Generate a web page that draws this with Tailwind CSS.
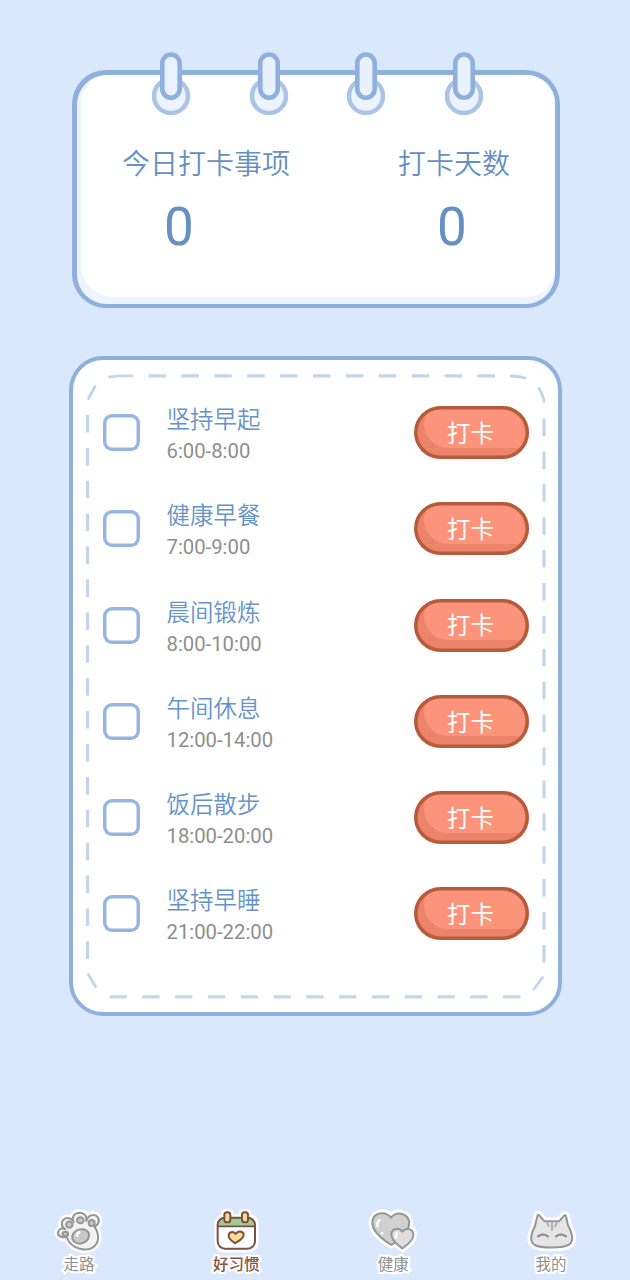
<!DOCTYPE html>
<html lang="zh-CN">
<head>
<meta charset="utf-8">
<title>好习惯</title>
<script src="https://cdn.jsdelivr.net/npm/@tailwindcss/browser@4"></script>
</head>
<body class="bg-[#dae8fd] font-['Roboto','Noto_Sans_CJK_SC',sans-serif]">
<svg class="hidden">
  <symbol id="ring" viewBox="0 0 40 64">
    <circle cx="19" cy="45" r="17" fill="#ecf3fd" stroke="#aac4e6" stroke-width="4.500"/>
    <rect x="10.300" y="3.500" width="17.400" height="43.200" rx="8.700" fill="#e8f1fd" stroke="#8fb0dc" stroke-width="4.600"/>
  </symbol>
</svg>
<div class="flex h-[1280px] w-[630px] flex-col overflow-hidden pt-[70px]">

  <section class="relative ml-[72px] h-[238px] w-[487.500px] shrink-0 rounded-[34px] bg-[#8fb0dc] p-[4.500px]">
    <div class="h-full rounded-[29.500px] bg-[#edf4fe] pl-[4.500px]">
      <div class="h-[222.500px] rounded-[28px] rounded-bl-[32px] bg-white px-[42px] pt-[74px]">
        <div class="flex justify-between text-[#668fc2]">
          <div class="-ml-px w-[168px]">
            <h2 class="text-[28px] leading-[32px] font-[350] whitespace-nowrap">今日打卡事项</h2>
            <p class="pt-[14px] pl-[42px] text-[53px] leading-[64px]">0</p>
          </div>
          <div class="w-[115px]">
            <h2 class="text-[28px] leading-[32px] font-[350] whitespace-nowrap">打卡天数</h2>
            <p class="pt-[14px] pl-[39px] text-[53px] leading-[64px]">0</p>
          </div>
        </div>
      </div>
    </div>
    <div class="absolute -top-[19px] left-[80px] flex gap-[57.500px]">
      <svg class="h-16 w-10"><use href="#ring"/></svg>
      <svg class="h-16 w-10"><use href="#ring"/></svg>
      <svg class="h-16 w-10"><use href="#ring"/></svg>
      <svg class="h-16 w-10"><use href="#ring"/></svg>
    </div>
  </section>

  <section class="relative mt-12 ml-[69px] h-[660px] w-[493px] shrink-0 rounded-[34px] border-4 border-[#8fb0dc] bg-white">
    <svg class="absolute -top-1 -left-1 h-[660px] w-[493px]" viewBox="69 356 493 660" fill="none" stroke="#c3d5ea" stroke-width="3.200">
      <path d="M148.500 375.800H496" stroke-dasharray="17.500 15.400"/>
      <path d="M544 418.500V963" stroke-dasharray="17.500 15.400"/>
      <path d="M109.500 996.800H521" stroke-dasharray="17.300 15.500"/>
      <path d="M87.500 415V959" stroke-dasharray="17.500 15.400"/>
      <g stroke-linecap="round" stroke-width="2.800">
        <path d="M109.500 377.200Q114 376 120 375.800H132"/>
        <path d="M88.500 398.500L95 386.500"/>
        <path d="M511 376Q519 376 525 378"/>
        <path d="M539 388.500Q543 394.500 544.200 401.500"/>
        <path d="M542.500 977.500L534 989"/>
        <path d="M88.500 974.500L95.500 986.500"/>
      </g>
    </svg>
    <ul id="habits" class="pt-[23px]"></ul>
  </section>

  <nav class="mt-[184px] ml-[40px] flex h-[80px] w-[550px] shrink-0 justify-between text-center text-[15.500px] leading-[20px] font-normal">
    <div class="w-20">
      <svg class="h-[55px] w-20" viewBox="0 0 240 165" stroke-linecap="round" stroke-linejoin="round">
        <path d="M80 111C62 116 50 105 55 94C59 85 70 83 76 88C62 80 62 62 75 56C87 51 98 58 101 66C93 50 105 37 121 38C135 39 142 50 139 63C144 46 160 40 171 49C181 59 176 76 163 80C178 100 178 125 163 139C143 157 93 150 80 111Z" fill="#fff" stroke="#fff" stroke-width="21"/>
        <path fill="#f2f2f2" stroke="#969696" stroke-width="6" d="M80 111C62 116 50 105 55 94C59 85 70 83 76 88C62 80 62 62 75 56C87 51 98 58 101 66C93 50 105 37 121 38C135 39 142 50 139 63C144 46 160 40 171 49C181 59 176 76 163 80C178 100 178 125 163 139C143 157 93 150 80 111Z"/>
        <g fill="#c9c9c9" stroke="#969696" stroke-width="6">
          <ellipse cx="76" cy="102" rx="8.500" ry="6.500"/><circle cx="88" cy="74" r="9.500"/><ellipse cx="121" cy="61" rx="10" ry="9"/><circle cx="155" cy="69" r="9"/>
          <ellipse cx="122" cy="109" rx="26" ry="21" transform="rotate(-18 122 109)"/>
        </g>
        <path d="M111 107Q111 98 118 96" fill="none" stroke="#fff" stroke-width="8"/>
      </svg>
      <p class="-ml-0.5 text-[#8f8f8f] [-webkit-text-stroke:4px_white] [paint-order:stroke_fill]">走路</p>
    </div>
    <div class="w-20">
      <svg class="-ml-px h-[55px] w-20" viewBox="0 0 240 165" stroke-linecap="round" stroke-linejoin="round">
        <path d="M67 75Q67 54 86 54H159Q176 54 176 75V125Q176 146 154 146H89Q67 146 67 125ZM87 39H101V64H87ZM140 39H154V64H140Z" fill="#fff" stroke="#fff" stroke-width="23"/>
        <rect x="65" y="53" width="112" height="93" rx="22" fill="#fff"/>
        <path d="M65 78V74Q65 53 86 53H156Q177 53 177 74V78Z" fill="#9dcc96"/>
        <rect x="65" y="53" width="112" height="93" rx="22" fill="none" stroke="#795044" stroke-width="6"/>
        <path d="M66 79H176" stroke="#795044" stroke-width="5.500"/>
        <g fill="#ffdb91" stroke="#795044" stroke-width="6"><rect x="85" y="37" width="18" height="30" rx="8"/><rect x="138" y="37" width="18" height="30" rx="8"/>
          <path d="M117 130C108 122 98 118 98 107C98 96 111 92 119 102C125 92 140 91 143 103C145 115 129 122 117 130Z"/></g>
      </svg>
      <p class="-ml-px font-medium text-[#865244] [-webkit-text-stroke:4px_white] [paint-order:stroke_fill]">好习惯</p>
    </div>
    <div class="w-20">
      <svg class="h-[55px] w-20" viewBox="0 0 240 165" stroke-linecap="round" stroke-linejoin="round">
        <g fill="#fff" stroke="#fff" stroke-width="22"><path d="M115 135C89 119 57 94 58 67C59 37 96 31 114 53C129 33 163 38 168 64C173 94 137 121 115 135Z"/><path d="M148 145C131 133 113 118 115 101C118 84 138 82 148 95C158 82 180 85 181 103C182 120 163 135 148 145Z"/></g>
        <g stroke="#969696" stroke-width="6"><path fill="#d0d0d0" d="M115 135C89 119 57 94 58 67C59 37 96 31 114 53C129 33 163 38 168 64C173 94 137 121 115 135Z"/><path fill="#dedede" d="M148 145C131 133 113 118 115 101C118 84 138 82 148 95C158 82 180 85 181 103C182 120 163 135 148 145Z"/></g>
        <path d="M74 79Q70 66 80 60M87 99L88 100M130 113Q127 104 132 99" fill="none" stroke="#fff" stroke-width="7"/>
      </svg>
      <p class="text-[#8f8f8f] [-webkit-text-stroke:4px_white] [paint-order:stroke_fill]">健康</p>
    </div>
    <div class="w-20">
      <svg class="h-[55px] w-20" viewBox="0 0 240 165" stroke-linecap="round" stroke-linejoin="round">
        <path d="M83 45Q86 43 89 48L104 64H147L162 47Q166 43 168 49L174 76C188 102 191 124 177 134C160 145 93 145 74 135C58 124 63 101 75 78Z" fill="#fff" stroke="#fff" stroke-width="23"/>
        <path d="M83 45Q86 43 89 48L104 64H147L162 47Q166 43 168 49L174 76C188 102 191 124 177 134C160 145 93 145 74 135C58 124 63 101 75 78Z" fill="#e5e5e5" stroke="#969696" stroke-width="6"/>
        <path d="M112 68L116 78M126 68V90M140 68L135 79" fill="none" stroke="#b0b0b0" stroke-width="6"/>
        <path d="M84 109Q99 98 114 109M138 109Q153 98 168 109" fill="none" stroke="#8b8b8b" stroke-width="6"/>
      </svg>
      <p class="ml-0.5 text-[#8f8f8f] [-webkit-text-stroke:4px_white] [paint-order:stroke_fill]">我的</p>
    </div>
  </nav>
</div>

<template id="row">
  <li class="flex h-[96.300px] pl-[30px]">
    <span class="mt-[31px] h-[37px] w-[37px] shrink-0 rounded-[9px] shadow-[inset_0_0_0_3.5px_#96b5e1]"></span>
    <div class="ml-[26.500px] w-[247.500px] pt-[21px]">
      <h3 class="text-[23.500px] leading-[32px] font-[350] text-[#6693c9]"></h3>
      <p class="-mt-px text-[20.300px] leading-[32px] text-[#8e8e8e]"></p>
    </div>
    <button class="relative mt-[23px] h-[53px] w-[115px] shrink-0 overflow-hidden rounded-full bg-[#ec836b] text-[23.500px] text-white">
      <span class="absolute top-0 -right-1 h-[41.500px] w-[109px] rounded-tl-[22px] rounded-bl-[30px] bg-[#fc937b]"></span>
      <span class="absolute inset-0 rounded-full shadow-[inset_0_0_0_3.5px_#b65b3c]"></span>
      <span class="relative top-[2px] -left-px">打卡</span>
    </button>
  </li>
</template>
<script>
const habits = [["坚持早起","6:00-8:00"],["健康早餐","7:00-9:00"],["晨间锻炼","8:00-10:00"],["午间休息","12:00-14:00"],["饭后散步","18:00-20:00"],["坚持早睡","21:00-22:00"]];
const row = document.getElementById("row");
for (const [name, time] of habits) {
  const item = row.content.cloneNode(true);
  item.querySelector("h3").textContent = name;
  item.querySelector("p").textContent = time;
  document.getElementById("habits").append(item);
}
</script>
</body>
</html>
